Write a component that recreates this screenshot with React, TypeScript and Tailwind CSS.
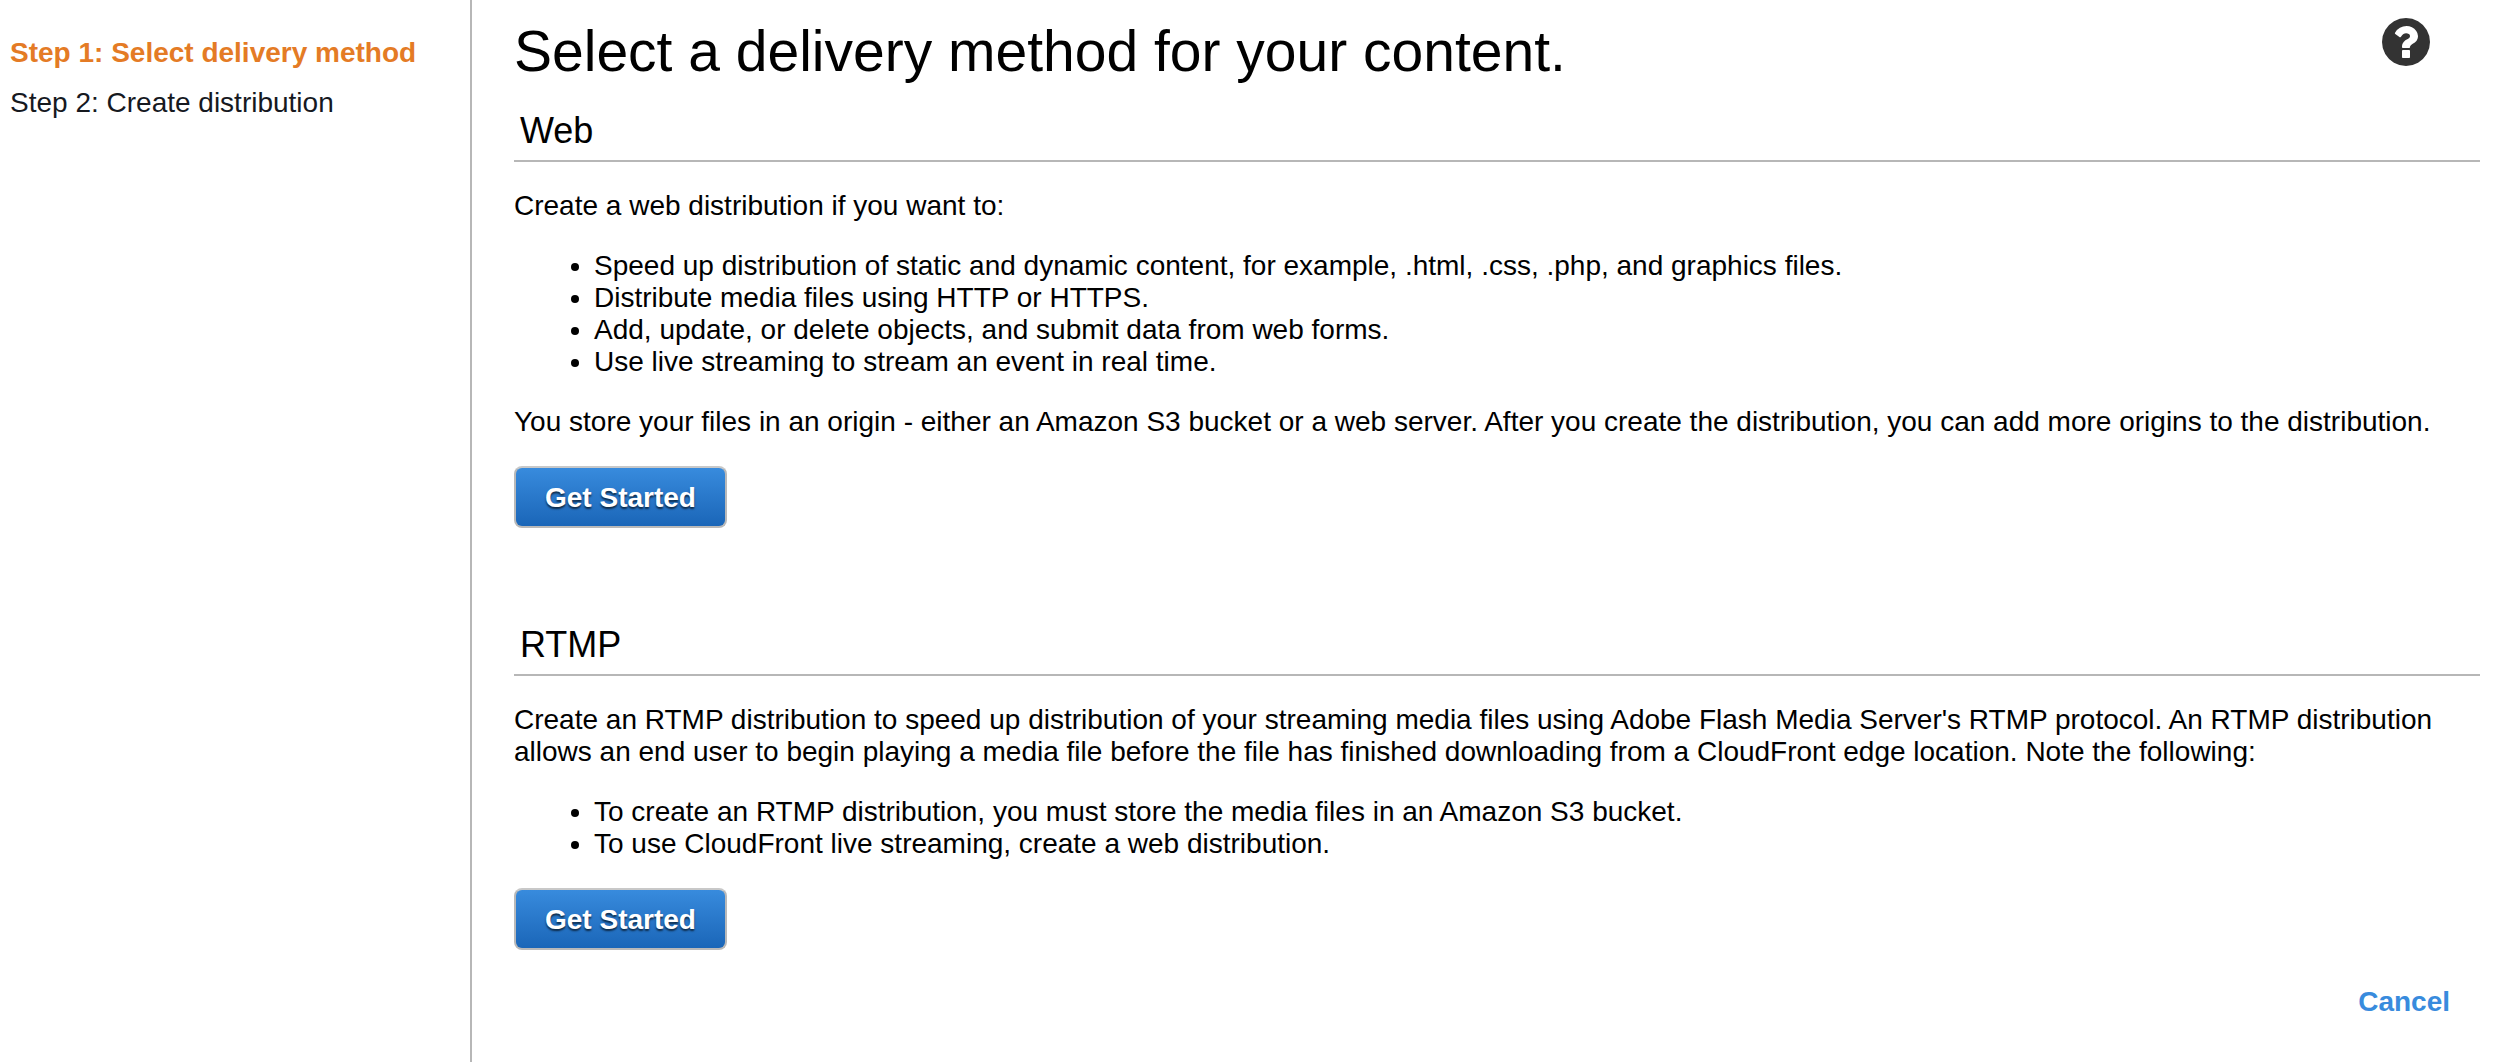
import type { ReactNode } from "react";

function Section({ title, children }: { title: string; children: ReactNode }) {
  return (
    <section>
      <h2 className="border-b-2 border-[#b7b7b7] px-1.5 pb-2 text-4xl leading-[42px]">{title}</h2>
      <div className="pt-7">{children}</div>
    </section>
  );
}

function BulletList({ items }: { items: string[] }) {
  return (
    <ul className="my-7 list-disc pl-20">
      {items.map((item) => (
        <li key={item}>{item}</li>
      ))}
    </ul>
  );
}

function StartButton() {
  return (
    <button
      type="button"
      className="block rounded-lg border-2 border-[#b9b9b9] border-t-[#c8c8c8] bg-linear-to-b from-[#388bdd] to-[#1a66b8] px-[29px] pt-3.5 pb-3 text-[28px] leading-8 font-bold text-white text-shadow-[0_2px_2px_#000000a6]"
    >
      Get Started
    </button>
  );
}

function HelpIcon() {
  return (
    <svg viewBox="0 128 1536 1536" className="size-12" fill="#333333" aria-hidden="true">
      <path d="M896 1376v-192q0-14-9-23t-23-9h-192q-14 0-23 9t-9 23v192q0 14 9 23t23 9h192q14 0 23-9t9-23zm256-672q0-88-55.5-163t-138.5-116-170-41q-243 0-371 213-15 24 8 42l132 100q7 6 19 6 16 0 25-12 53-68 86-92 34-24 86-24 48 0 85.5 26t37.5 59q0 38-20 61t-68 45q-63 28-115.5 86.5t-52.5 125.5v36q0 14 9 23t23 9h192q14 0 23-9t9-23q0-19 21.5-49.5t54.5-49.5q32-18 49-28.5t46-35 44.5-48 28-60.5 12.5-81zm384 192q0 209-103 385.5t-279.5 279.5-385.5 103-385.5-103-279.5-279.5-103-385.5 103-385.5 279.5-279.5 385.5-103 385.5 103 279.5 279.5 103 385.5z" />
    </svg>
  );
}

export default function App() {
  return (
    <div className="flex min-h-screen bg-white font-['Liberation_Sans',Arial,sans-serif] text-black">
      <nav className="w-[472px] shrink-0 border-r-2 border-[#b7b7b7] px-2.5 pt-9">
        <ol className="flex flex-col gap-4 text-[28px] leading-[34px]">
          <li className="font-bold text-[#e47b25]" aria-current="step">
            Step 1: Select delivery method
          </li>
          <li className="text-[#16191f]">Step 2: Create distribution</li>
        </ol>
      </nav>
      <main className="min-w-0 flex-1 pt-4 pr-[18px] pl-[42px] text-[28px] leading-8">
        <div className="mb-6 flex items-start justify-between pr-[50px]">
          <h1 className="text-[57px] leading-[70px]">Select a delivery method for your content.</h1>
          <button type="button" aria-label="Help" className="mt-0.5">
            <HelpIcon />
          </button>
        </div>
        <div className="flex flex-col gap-24">
          <Section title="Web">
            <p>Create a web distribution if you want to:</p>
            <BulletList
              items={[
                "Speed up distribution of static and dynamic content, for example, .html, .css, .php, and graphics files.",
                "Distribute media files using HTTP or HTTPS.",
                "Add, update, or delete objects, and submit data from web forms.",
                "Use live streaming to stream an event in real time.",
              ]}
            />
            <p className="mb-7">
              You store your files in an origin - either an Amazon S3 bucket or a web server. After you create the
              distribution, you can add more origins to the distribution.
            </p>
            <StartButton />
          </Section>
          <Section title="RTMP">
            <p>
              Create an RTMP distribution to speed up distribution of your streaming media files using Adobe Flash
              Media Server's RTMP protocol. An RTMP distribution allows an end user to begin playing a media file
              before the file has finished downloading from a CloudFront edge location. Note the following:
            </p>
            <BulletList
              items={[
                "To create an RTMP distribution, you must store the media files in an Amazon S3 bucket.",
                "To use CloudFront live streaming, create a web distribution.",
              ]}
            />
            <StartButton />
          </Section>
        </div>
        <div className="flex justify-end pt-9 pr-[30px]">
          <a href="#" className="font-bold text-[#388bdd]">
            Cancel
          </a>
        </div>
      </main>
    </div>
  );
}
